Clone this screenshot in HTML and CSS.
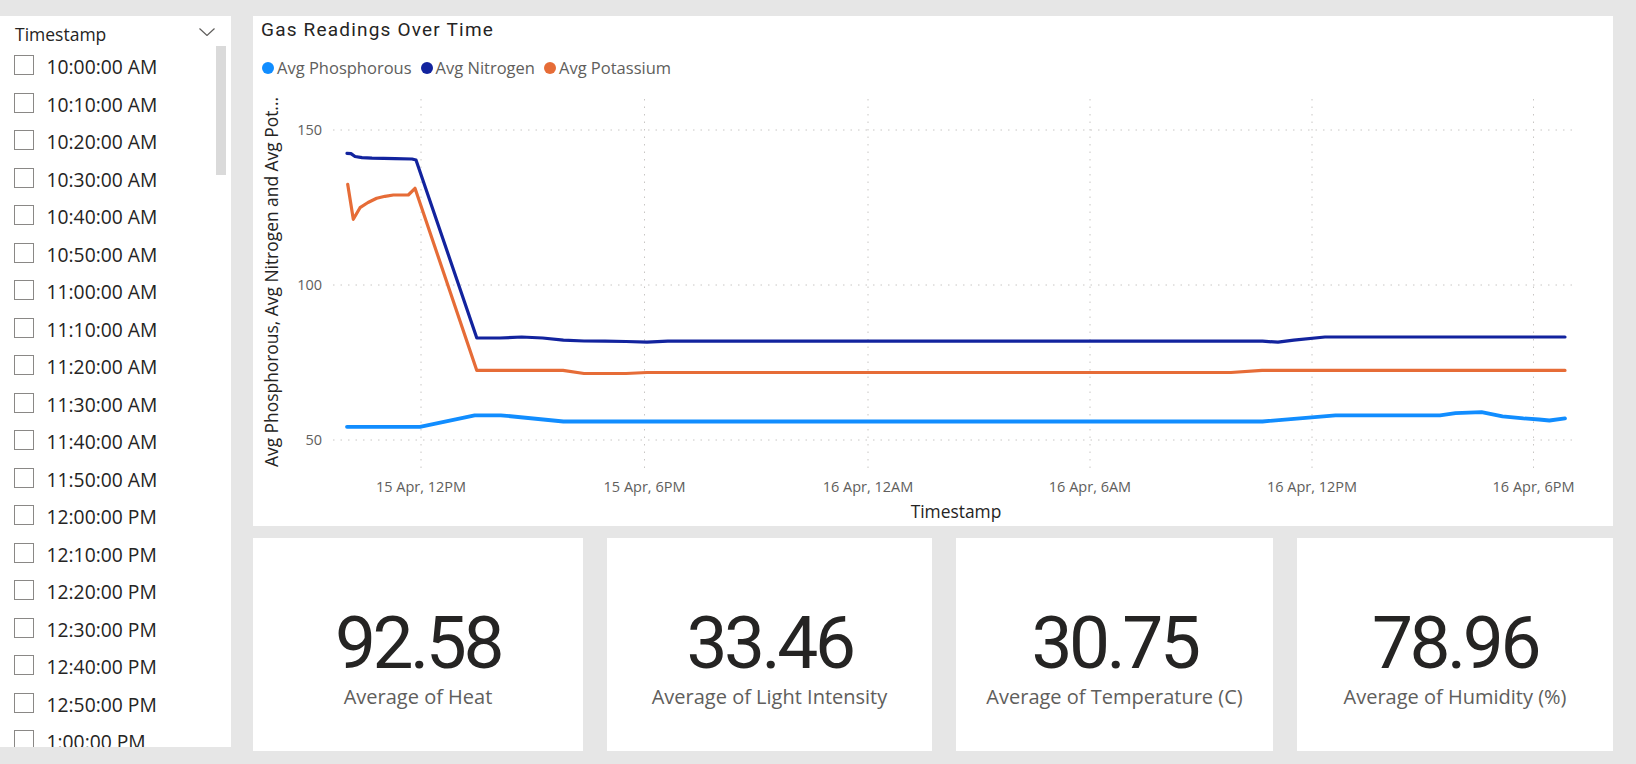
FILE: index.html
```html
<!DOCTYPE html>
<html lang="en">
<head>
<meta charset="utf-8">
<title>Gas Readings Dashboard</title>
<link rel="stylesheet" href="styles.css">
</head>
<body>
<div class="page">
  <aside class="slicer">
    <div class="slicer-head">
      <span class="slicer-title">Timestamp</span>
      <svg class="chev" width="16" height="8" viewBox="0 0 16 8"><polyline points="0.5,0.5 8,7.5 15.5,0.5" fill="none" stroke="#605e5c" stroke-width="1.2"/></svg>
    </div>
    <div class="slicer-body">
      <ul class="items">
        <li class="item"><span class="box"></span><span class="label">10:00:00 AM</span></li>
        <li class="item"><span class="box"></span><span class="label">10:10:00 AM</span></li>
        <li class="item"><span class="box"></span><span class="label">10:20:00 AM</span></li>
        <li class="item"><span class="box"></span><span class="label">10:30:00 AM</span></li>
        <li class="item"><span class="box"></span><span class="label">10:40:00 AM</span></li>
        <li class="item"><span class="box"></span><span class="label">10:50:00 AM</span></li>
        <li class="item"><span class="box"></span><span class="label">11:00:00 AM</span></li>
        <li class="item"><span class="box"></span><span class="label">11:10:00 AM</span></li>
        <li class="item"><span class="box"></span><span class="label">11:20:00 AM</span></li>
        <li class="item"><span class="box"></span><span class="label">11:30:00 AM</span></li>
        <li class="item"><span class="box"></span><span class="label">11:40:00 AM</span></li>
        <li class="item"><span class="box"></span><span class="label">11:50:00 AM</span></li>
        <li class="item"><span class="box"></span><span class="label">12:00:00 PM</span></li>
        <li class="item"><span class="box"></span><span class="label">12:10:00 PM</span></li>
        <li class="item"><span class="box"></span><span class="label">12:20:00 PM</span></li>
        <li class="item"><span class="box"></span><span class="label">12:30:00 PM</span></li>
        <li class="item"><span class="box"></span><span class="label">12:40:00 PM</span></li>
        <li class="item"><span class="box"></span><span class="label">12:50:00 PM</span></li>
        <li class="item"><span class="box"></span><span class="label">1:00:00 PM</span></li>
      </ul>
      <div class="scroll-thumb"></div>
    </div>
  </aside>

  <main class="main">
    <section class="chart">
      <h2 class="chart-title">Gas Readings Over Time</h2>
      <div class="legend">
        <span class="legend-item"><span class="dot dot-p"></span>Avg Phosphorous</span>
        <span class="legend-item"><span class="dot dot-n"></span>Avg Nitrogen</span>
        <span class="legend-item"><span class="dot dot-k"></span>Avg Potassium</span>
      </div>
      <svg class="plot" width="1360" height="441" viewBox="253 85 1360 441">
        <g class="grid">
          <line x1="333" y1="130" x2="1572" y2="130"/>
          <line x1="333" y1="285" x2="1572" y2="285"/>
          <line x1="333" y1="440" x2="1572" y2="440"/>
          <line x1="421" y1="99" x2="421" y2="471"/>
          <line x1="644.5" y1="99" x2="644.5" y2="471"/>
          <line x1="868" y1="99" x2="868" y2="471"/>
          <line x1="1090" y1="99" x2="1090" y2="471"/>
          <line x1="1312" y1="99" x2="1312" y2="471"/>
          <line x1="1533.5" y1="99" x2="1533.5" y2="471"/>
        </g>
        <g class="ylabels">
          <text x="322" y="135.3">150</text>
          <text x="322" y="290.3">100</text>
          <text x="322" y="445.3">50</text>
        </g>
        <g class="xlabels">
          <text x="421" y="491.5">15 Apr, 12PM</text>
          <text x="644.5" y="491.5">15 Apr, 6PM</text>
          <text x="868" y="491.5">16 Apr, 12AM</text>
          <text x="1090" y="491.5">16 Apr, 6AM</text>
          <text x="1312" y="491.5">16 Apr, 12PM</text>
          <text x="1533.5" y="491.5">16 Apr, 6PM</text>
        </g>
        <text class="axis-title" x="956" y="517.5">Timestamp</text>
        <text class="axis-title" transform="translate(278,282) rotate(-90)">Avg Phosphorous, Avg Nitrogen and Avg Pot...</text>
        <polyline class="series s-n" points="347,153.3 351,153.6 355,156.5 362,157.6 372,158.2 395,158.6 412,159 416,160 476.8,338 500,338 521.7,337 542.6,338 563.4,340.2 584,341 605,341.2 626,341.5 647,342.2 667.8,341.2 1262.5,341.2 1278,342.2 1293.8,340.2 1325,337 1565,337"/>
        <polyline class="series s-k" points="347.7,184.3 353.3,219.3 360,207.7 368,202.5 376.7,198.3 385,196.3 393.3,195 408.3,195 415,188.3 476.8,370.4 563,370.4 584,373.5 626,373.5 647,372.5 1231,372.5 1262,370.4 1565,370.4"/>
        <polyline class="series s-p" points="347,426.8 420,426.8 474.7,415.3 500.8,415.3 563.4,421.5 1262.5,421.5 1335.5,415.3 1440,415.3 1455.5,413.2 1481.6,412.1 1502.5,416.3 1523.4,418.4 1539,419.5 1549.4,420.5 1565,418.4"/>
      </svg>
    </section>

    <section class="cards">
      <div class="card"><div class="card-value">92.58</div><div class="card-label">Average of Heat</div></div>
      <div class="card"><div class="card-value">33.46</div><div class="card-label">Average of Light Intensity</div></div>
      <div class="card"><div class="card-value">30.75</div><div class="card-label">Average of Temperature (C)</div></div>
      <div class="card"><div class="card-value">78.96</div><div class="card-label">Average of Humidity (%)</div></div>
    </section>
  </main>
</div>
</body>
</html>
```

FILE: styles.css
```css
* { box-sizing: border-box; }

html, body { margin: 0; padding: 0; }

body {
  width: 1636px;
  height: 764px;
  overflow: hidden;
  background: #e6e6e6;
  font-family: "Open Sans", "Liberation Sans", sans-serif;
  color: #252423;
}

.page {
  display: flex;
  gap: 22px;
  padding-top: 16px;
  height: 764px;
}

/* ---------- slicer ---------- */
.slicer {
  width: 231px;
  height: 731px;
  flex-shrink: 0;
  background: #fff;
  overflow: hidden;
}

.slicer-head {
  display: flex;
  justify-content: space-between;
  align-items: flex-start;
  padding: 7px 16px 0 15px;
  height: 30.25px;
}

.slicer-title {
  font-size: 17.5px;
  line-height: 22px;
  color: #252423;
}

.chev { margin-top: 5px; display: block; }

.slicer-body {
  display: flex;
  align-items: flex-start;
}

.items {
  list-style: none;
  margin: 0;
  padding: 0 0 0 14px;
  flex: 1;
}

.item {
  display: flex;
  align-items: center;
  height: 37.5px;
  gap: 12.5px;
}

.box {
  width: 20px;
  height: 20px;
  border: 1px solid #8a8886;
  flex-shrink: 0;
}

.label {
  font-size: 19.3px;
  line-height: 24px;
  margin-top: 4px;
  color: #252423;
  white-space: nowrap;
}

.scroll-thumb {
  width: 10px;
  height: 129px;
  margin-right: 5px;
  flex-shrink: 0;
  background: #dadada;
}

/* ---------- main column ---------- */
.main {
  display: flex;
  flex-direction: column;
  gap: 12px;
  width: 1360px;
}

.chart {
  height: 510px;
  background: #fff;
}

.chart-title {
  margin: 0;
  padding: 2px 0 0 8px;
  font-family: Roboto, "Liberation Sans", sans-serif;
  font-weight: 400;
  font-size: 19px;
  line-height: 24px;
  letter-spacing: 1.2px;
  color: #252423;
}

.legend {
  display: flex;
  align-items: center;
  gap: 9px;
  margin-top: 15.5px;
  padding-left: 9px;
  height: 20px;
  font-size: 16.5px;
  line-height: 20px;
  color: #605e5c;
}

.legend-item {
  display: flex;
  align-items: center;
  gap: 3px;
}

.dot {
  width: 12px;
  height: 12px;
  border-radius: 50%;
}
.dot-p { background: #118dff; }
.dot-n { background: #12239e; }
.dot-k { background: #e66c37; }

.plot {
  display: block;
  margin-top: 7.5px;
  font-family: "Open Sans", "Liberation Sans", sans-serif;
}

.grid line {
  stroke: #c8c6c4;
  stroke-width: 1;
  stroke-dasharray: 1.5 6;
}

.ylabels text {
  font-size: 14.5px;
  fill: #605e5c;
  text-anchor: end;
}

.xlabels text {
  font-size: 14.5px;
  fill: #605e5c;
  text-anchor: middle;
}

.axis-title {
  font-size: 17.4px;
  fill: #252423;
  text-anchor: middle;
}

.series {
  fill: none;
  stroke-width: 3.2;
  stroke-linejoin: round;
  stroke-linecap: round;
}
.s-p { stroke: #118dff; stroke-width: 3.8; }
.s-n { stroke: #12239e; }
.s-k { stroke: #e66c37; }

/* ---------- cards ---------- */
.cards {
  display: grid;
  grid-template-columns: 330px 325px 317px 316px;
  gap: 24px;
  height: 213px;
}

.card {
  background: #fff;
  display: flex;
  flex-direction: column;
  align-items: center;
  padding-top: 64.75px;
}

.card-value {
  font-family: Roboto, "Liberation Sans", sans-serif;
  font-weight: 400;
  font-size: 73px;
  line-height: 80px;
  letter-spacing: -3.5px;
  color: #252423;
}

.card-label {
  margin-top: 2.5px;
  font-size: 20px;
  line-height: 24px;
  color: #605e5c;
  white-space: nowrap;
}
```
